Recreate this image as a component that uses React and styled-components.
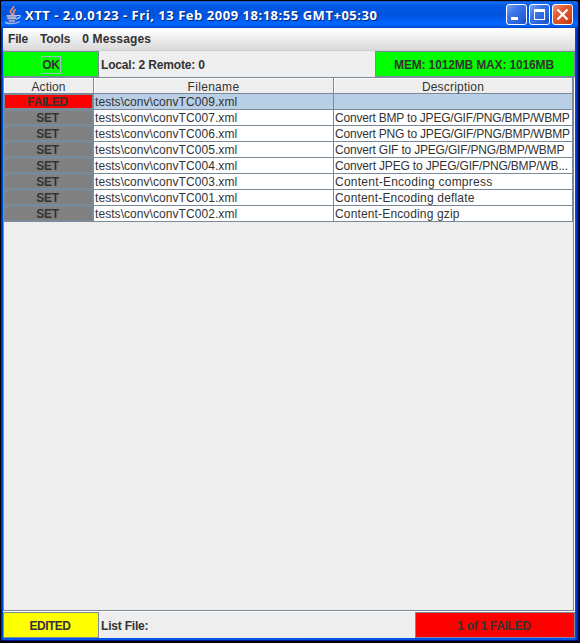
import React from "react";
import styled, { createGlobalStyle } from "styled-components";

const LINE = "#7a8a99";

const Global = createGlobalStyle`
  * { box-sizing: border-box; }
  body { margin: 0; background: #000; }
`;

const Window = styled.div`
  width: 580px;
  height: 643px;
  overflow: hidden;
  background: #000;
  padding: 1px 1px 2px 1px;
  font: 12px "Liberation Sans", Arial, sans-serif;
  color: #333;
  cursor: default;
`;

const Frame = styled.div`
  width: 578px;
  height: 640px;
  display: flex;
  flex-direction: column;
  padding: 0 4px 3px 2px;
  border-radius: 2px 3px 0 0;
  background: linear-gradient(90deg, #0022a8 0, #0055ea 2px, #0050e8 574px, #0030c8 576px, #00138c 577px, #000 578px);
  box-shadow: inset 0 -1px #00138c;
`;

const TitleBar = styled.header`
  flex: none;
  height: 27px;
  margin: 0 -3px 0 -2px;
  padding: 0 5px 0 3px;
  display: flex;
  align-items: center;
  border-radius: 2px 3px 0 0;
  background: linear-gradient(#0040c8 0, #1a6cf0 1px, #0862ec 3px, #0056e4 6px, #0052dc 14px, #0060f4 20px, #0066ff 23px, #005ced 25px, #0044c8 27px);
`;

const Title = styled.h1`
  margin: 0 0 0 3px;
  flex: 1;
  white-space: pre;
  font: bold 13px/28px "Open Sans", "Noto Sans", sans-serif;
  letter-spacing: 0.53px;
  color: #fff;
  text-shadow: 1px 1px #00267c;
`;

const CaptionButtons = styled.div`
  display: flex;
  gap: 2px;
`;

const CaptionButton = styled.button`
  width: 21px;
  height: 21px;
  padding: 0;
  display: grid;
  place-items: center;
  border: 1px solid #fff;
  border-radius: 3px;
  background: ${(p) =>
    p.$close
      ? "linear-gradient(135deg, #ef9a7c, #e25a35 35%, #d64820 75%, #b93410)"
      : "linear-gradient(135deg, #7da4f3, #3c75ea 35%, #2860dd 75%, #1848c0)"};
`;

const MenuBar = styled.nav`
  flex: none;
  height: 23px;
  padding: 0 5px 1px;
  display: flex;
  align-items: center;
  gap: 12px;
  font-weight: bold;
  background: linear-gradient(#fff, #dadada);
  border-bottom: 1px solid #ccc;
`;

const Label = styled.span`
  white-space: pre;
  letter-spacing: ${(p) => p.$track || 0}px;
`;

const StatusRow = styled.div`
  flex: none;
  height: 26px;
  display: flex;
  align-items: stretch;
  justify-content: space-between;
  background: #eee;
  font-weight: bold;
`;

const StatusBox = styled.div`
  width: ${(p) => p.$width}px;
  padding: 2px 2px 0 0;
  display: flex;
  align-items: center;
  justify-content: center;
  background: ${(p) => p.$color};
  border: 1px solid ${LINE};
`;

const StatusText = styled.div`
  flex: 1;
  padding: 2px 0 0 2px;
  display: flex;
  align-items: center;
`;

const Focus = styled.span`
  height: 18px;
  line-height: 18px;
  padding: 0 1px;
  margin: -1px 0 0 2px;
  letter-spacing: -0.3px;
  box-shadow: inset 0 0 0 1px #a3b8cc;
`;

const ScrollPane = styled.main`
  flex: 1;
  background: #eee;
  border: 1px solid ${LINE};
  border-right-color: #fff;
  box-shadow: inset -1px 0 ${LINE}, 0 1px #fff;
  margin-bottom: 1px;
`;

const Table = styled.div`
  display: grid;
  grid-template-columns: 90px 240px 239px;
`;

const HeadCell = styled.div`
  height: 16px;
  line-height: 18px;
  text-align: center;
  letter-spacing: ${(p) => p.$track || 0}px;
  border: solid ${LINE};
  border-width: 0 1px 1px 0;
  box-shadow: inset 1px 1px #fff;
`;

const ActionCell = styled.div`
  height: 16px;
  line-height: 14px;
  padding-right: 2px;
  text-align: center;
  font-weight: bold;
  letter-spacing: ${(p) => (p.$failed ? -0.4 : -0.25)}px;
  border: solid ${LINE};
  border-width: 1px 2px 2px 1px;
  background: ${(p) => (p.$failed ? "#f00" : "#808080")};
`;

const Cell = styled.div`
  height: 16px;
  line-height: 17px;
  padding-left: 1px;
  overflow: hidden;
  white-space: pre;
  letter-spacing: ${(p) => p.$track || 0}px;
  border: solid ${LINE};
  border-width: 0 1px 1px 0;
  background: ${(p) => (p.$selected ? "#b8cfe5" : "#fff")};
`;

const rows = [
  { file: "009", failed: true, text: "" },
  { file: "007", text: "Convert BMP to JPEG/GIF/PNG/BMP/WBMP", track: -0.2 },
  { file: "006", text: "Convert PNG to JPEG/GIF/PNG/BMP/WBMP", track: -0.2 },
  { file: "005", text: "Convert GIF to JPEG/GIF/PNG/BMP/WBMP", track: -0.19 },
  { file: "004", text: "Convert JPEG to JPEG/GIF/PNG/BMP/WB...", track: -0.17 },
  { file: "003", text: "Content-Encoding compress", track: 0.24 },
  { file: "001", text: "Content-Encoding deflate", track: 0.17 },
  { file: "002", text: "Content-Encoding gzip", track: 0.15 },
];

function JavaCup() {
  return (
    <svg width="18" height="20" viewBox="0 0 18 20" fill="none">
      <path d="M9.500 1c1 2.500-4 4-3 6 .4 1 2 1.500 1.500 3.500M12 4.500C8 6 10.500 7.500 9.500 10" stroke="#f08a62" strokeWidth="1.700" />
      <path d="M2.500 10.500h10l-1.500 6h-7z" fill="#5b68ad" />
      <path d="M2.500 10.800h10.500M3.500 13.200h8.500M5 16h6" stroke="#d5dcf5" strokeWidth="1.200" />
      <path d="M13 10.500h3c.5 2-1.500 3-4 3.500" stroke="#c3cdf0" strokeWidth="1.200" />
      <path d="M1 17c2 2.200 11 2.200 14.500-.5" stroke="#a9b5e6" strokeWidth="1.500" />
    </svg>
  );
}

export default function App() {
  return (
    <Window>
      <Global />
      <Frame>
        <TitleBar>
          <JavaCup />
          <Title>XTT - 2.0.0123 - Fri, 13 Feb 2009 18:18:55 GMT+05:30</Title>
          <CaptionButtons>
            <CaptionButton aria-label="Minimize">
              <svg width="19" height="19"><path d="M4 12h7v3H4z" fill="#fff" /></svg>
            </CaptionButton>
            <CaptionButton aria-label="Maximize">
              <svg width="19" height="19"><path d="M4 4h11v11H4zM5 7v7h9V7z" fill="#fff" fillRule="evenodd" /></svg>
            </CaptionButton>
            <CaptionButton $close aria-label="Close">
              <svg width="19" height="19"><path d="M4.500 4.500l10 10M14.500 4.500l-10 10" stroke="#fff" strokeWidth="2.200" /></svg>
            </CaptionButton>
          </CaptionButtons>
        </TitleBar>
        <MenuBar>
          <Label $track={-0.2}>File</Label>
          <Label $track={-0.15}>Tools</Label>
          <Label $track={0.15}>0 Messages</Label>
        </MenuBar>
        <StatusRow>
          <StatusBox $width={96} $color="#0f0"><Focus>OK</Focus></StatusBox>
          <StatusText><Label $track={-0.16}>Local: 2 Remote: 0</Label></StatusText>
          <StatusBox $width={200} $color="#0f0"><Label $track={-0.15}>MEM: 1012MB MAX: 1016MB</Label></StatusBox>
        </StatusRow>
        <ScrollPane>
          <Table>
            <HeadCell $track={0.1}>Action</HeadCell>
            <HeadCell $track={0.3}>Filename</HeadCell>
            <HeadCell $track={0.2}>Description</HeadCell>
            {rows.map((r) => (
              <React.Fragment key={r.file}>
                <ActionCell $failed={r.failed}>{r.failed ? "FAILED" : "SET"}</ActionCell>
                <Cell $track={0.06} $selected={r.failed}>{`tests\\conv\\convTC${r.file}.xml`}</Cell>
                <Cell $track={r.track} $selected={r.failed}>{r.text}</Cell>
              </React.Fragment>
            ))}
          </Table>
        </ScrollPane>
        <StatusRow>
          <StatusBox $width={96} $color="#ff0"><Label $track={-0.5}>EDITED</Label></StatusBox>
          <StatusText><Label $track={-0.2}>List File:</Label></StatusText>
          <StatusBox $width={160} $color="#f00"><Label $track={-0.3}>1 of 1 FAILED</Label></StatusBox>
        </StatusRow>
      </Frame>
    </Window>
  );
}
